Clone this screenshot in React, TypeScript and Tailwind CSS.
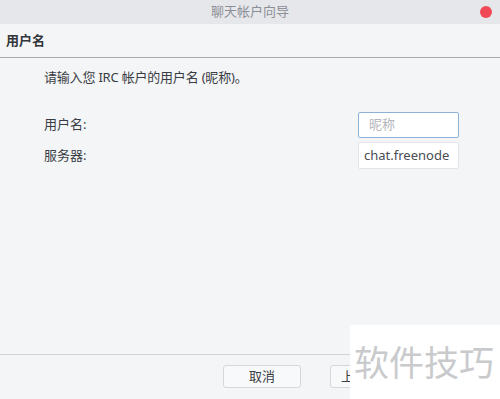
import React from "react";

const font = { fontFamily: '"Noto Sans", "Noto Sans CJK SC", sans-serif' };

export default function App() {
  return (
    <div
      className="relative w-[500px] h-[399px] overflow-hidden bg-[#f4f5f7] text-[#3a3d44] flex flex-col"
      style={font}
    >
      {/* Title bar */}
      <div className="relative h-6 shrink-0 bg-[#e6e7ea] flex items-center justify-center">
        <span className="text-[13px] text-[#8b8e97]">聊天帐户向导</span>
        <span className="absolute right-2 top-[6px] w-3 h-3 rounded-full bg-[#ef4a55]" />
      </div>

      {/* Page header */}
      <div className="h-[34px] shrink-0 flex items-center px-[6px] border-b border-[#a9abb0]">
        <span className="text-[13px] font-bold text-[#33363c]">用户名</span>
      </div>

      {/* Body */}
      <div className="flex-1 flex flex-col pl-[44px] pr-[41px] pt-[9px]">
        <p className="text-[13px] leading-5 tracking-[-0.2px]">请输入您 IRC 帐户的用户名 (昵称)。</p>
        <div className="mt-[25px] flex flex-col gap-1">
          <div className="flex items-center justify-between">
            <span className="text-[13px]">用户名:</span>
            <div className="w-[101px] h-[26px] rounded-[2px] border border-[#8cb3d6] bg-white flex items-center px-[10px] text-[13px] text-[#b4b6bb]">
              昵称
            </div>
          </div>
          <div className="flex items-center justify-between">
            <span className="text-[13px]">服务器:</span>
            <div className="w-[101px] h-[27px] rounded-[2px] border border-[#e3e4e7] bg-white flex items-center px-[5px] text-[13px] text-[#4a4d54] overflow-hidden whitespace-nowrap">
              chat.freenode
            </div>
          </div>
        </div>
      </div>

      {/* Footer */}
      <div className="h-[45px] shrink-0 border-t border-[#d3d4d7] flex items-start pt-[10px] pl-[223px] gap-[29px]">
        <button className="w-[78px] h-[23px] rounded-[3px] border border-[#d6d7da] bg-[#f8f9fa] text-[13px] text-[#3a3d44]">
          取消
        </button>
        <button className="w-[78px] h-[23px] rounded-[3px] border border-[#d6d7da] bg-[#f8f9fa] text-[13px] text-[#3a3d44] whitespace-nowrap text-left pl-[10px]">
          上一步
        </button>
      </div>

      {/* Watermark overlay */}
      <div className="absolute left-[350px] top-[325px] w-[150px] h-[74px] bg-white flex items-center pl-[4px]">
        <span className="text-[35px] leading-none text-[#c9cacc] whitespace-nowrap">软件技巧</span>
      </div>
    </div>
  );
}
